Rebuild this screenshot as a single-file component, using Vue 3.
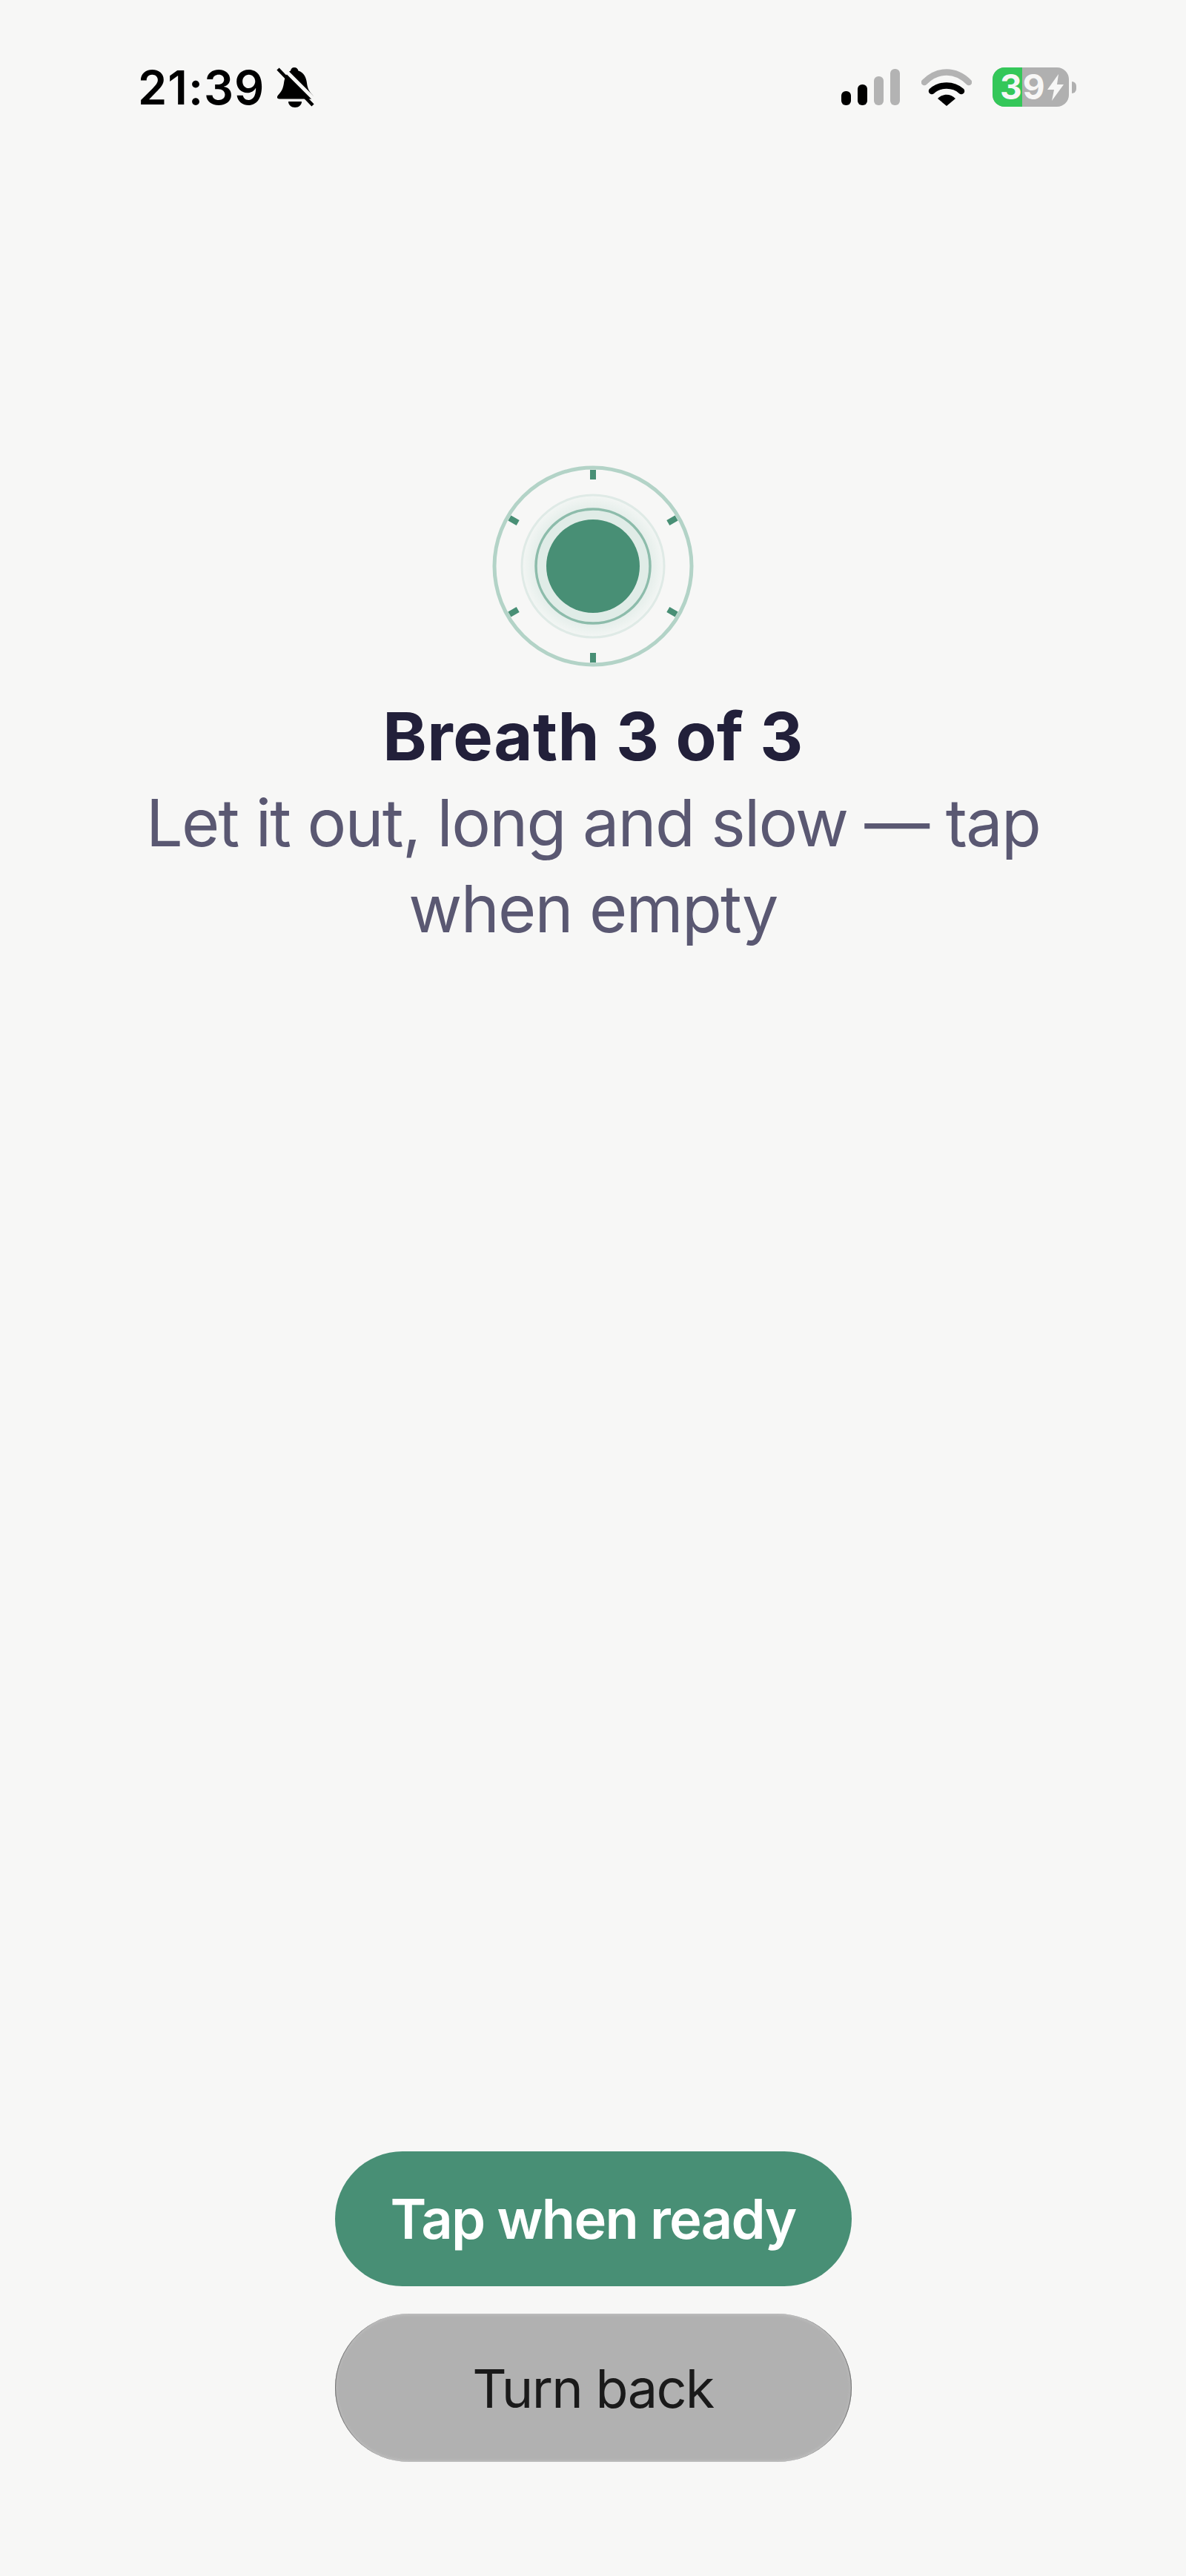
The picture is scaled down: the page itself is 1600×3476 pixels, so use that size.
<script setup>
// six tick marks round the breathing dial
const ticks = [0, 60, 120, 180, 240, 300]
</script>

<template>
  <div class="screen">
    <header class="status-bar">
      <div class="status-left">
        <span class="clock">21:39</span>
        <svg class="bell" viewBox="0 0 51 54" aria-hidden="true">
          <path d="M24 0c3 0 5 2 5.500 4.500C37 7 40 13 41 21c.8 7 3 11.500 7.500 16 2.500 2.500 2 5.500-1.500 5.500H4C.5 42.500 0 39.500 2.500 37 7 32.500 9 28 10 21c1-8 4-14 9-16.500C19.500 2 21 0 24 0z" />
          <path d="M16 46h18c0 4.500-4 8-9 8s-9-3.500-9-8z" />
          <path class="bell-gap" d="M7 -1L54 46" />
          <path class="bell-slash" d="M2 2L49 51" />
        </svg>
      </div>
      <div class="status-right">
        <div class="signal">
          <span class="bar bar-1"></span>
          <span class="bar bar-2"></span>
          <span class="bar bar-3 off"></span>
          <span class="bar bar-4 off"></span>
        </div>
        <svg class="wifi" viewBox="0 0 68 50" aria-hidden="true">
          <path class="wifi-off" d="M4 18C22 0 46 0 64 18" />
          <path class="wifi-on" d="M14 30C25 20 43 20 54 30" />
          <path d="M34 50L22 40C29 33 39 33 46 40z" />
        </svg>
        <div class="battery">
          <div class="battery-body">
            <div class="battery-fill"></div>
            <span class="battery-text">39</span>
            <svg class="bolt" viewBox="0 0 22 36" aria-hidden="true">
              <path d="M15 0L0 21h9L6 36 22 14h-9z" />
            </svg>
          </div>
          <span class="battery-nub"></span>
        </div>
      </div>
    </header>

    <main class="hero">
      <svg class="dial" viewBox="0 0 280 280" aria-hidden="true">
        <defs>
          <radialGradient id="halo-fade" cx="50%" cy="50%" r="50%">
            <stop offset="78%" stop-color="#e3ede9" />
            <stop offset="100%" stop-color="#f3f6f4" />
          </radialGradient>
        </defs>
        <circle class="halo" cx="140" cy="140" r="96" />
        <circle class="mid-ring" cx="140" cy="140" r="77" />
        <circle class="outer-ring" cx="140" cy="140" r="133" />
        <rect
          v-for="a in ticks"
          :key="a"
          class="tick"
          x="136"
          y="10"
          width="8"
          height="13"
          :transform="`rotate(${a} 140 140)`"
        />
        <circle class="core" cx="140" cy="140" r="63" />
      </svg>
      <h1 class="title">Breath 3 of 3</h1>
      <p class="subtitle">Let it out, long and slow — tap when empty</p>
    </main>

    <footer class="actions">
      <button class="btn btn-primary">Tap when ready</button>
      <button class="btn btn-secondary">Turn back</button>
    </footer>
  </div>
</template>

<style>
html,
body {
  margin: 0;
  background: #f7f7f6;
}
</style>

<style scoped>
.screen {
  display: flex;
  flex-direction: column;
  width: 1600px;
  height: 3476px;
  box-sizing: border-box;
  padding-bottom: 154px;
  background: #f7f7f6;
  font-family: Inter, "Liberation Sans", sans-serif;
}

.status-bar {
  display: flex;
  align-items: flex-start;
  justify-content: space-between;
  padding: 91px 148px 0 186px;
  height: 54px;
}

.status-left {
  display: flex;
  align-items: center;
  gap: 16px;
}

.clock {
  font-size: 63px;
  line-height: 54px;
  font-weight: 600;
  letter-spacing: 1px;
  color: #000;
}

.bell {
  width: 51px;
  height: 54px;
  fill: #000;
}

.bell-gap {
  stroke: #f7f7f6;
  stroke-width: 5;
  fill: none;
}

.bell-slash {
  stroke: #000;
  stroke-width: 4.500;
  fill: none;
}

.status-right {
  display: flex;
  align-items: flex-start;
}

.signal {
  display: flex;
  align-items: flex-end;
  gap: 9px;
  height: 49px;
  margin-top: 2px;
  margin-right: 29px;
}

.bar {
  width: 13px;
  border-radius: 6px;
  background: #000;
}

.bar.off {
  background: #b3b3b3;
}

.bar-1 { height: 19px; }
.bar-2 { height: 28px; }
.bar-3 { height: 39px; }
.bar-4 { height: 49px; }

.wifi {
  width: 68px;
  height: 50px;
  margin-top: 2px;
  margin-right: 28px;
  fill: #000;
}

.wifi-off,
.wifi-on {
  fill: none;
  stroke-width: 8.500;
  stroke-linecap: round;
}

.wifi-off { stroke: #b3b3b3; }
.wifi-on { stroke: #000; }

.battery {
  display: flex;
  align-items: center;
  gap: 4px;
}

.battery-body {
  position: relative;
  display: flex;
  align-items: center;
  width: 103px;
  height: 53px;
  border-radius: 16px;
  background: #b0b0b0;
}

.battery-fill {
  position: absolute;
  left: 0;
  top: 0;
  bottom: 0;
  width: 40px;
  border-radius: 16px 0 0 16px;
  background: #34c759;
}

.battery-text {
  position: relative;
  margin-left: 10px;
  font-size: 46px;
  line-height: 53px;
  font-weight: 700;
  letter-spacing: 1px;
  color: #f7f7f6;
}

.bolt {
  position: relative;
  width: 22px;
  height: 36px;
  margin-left: 2px;
  fill: #f7f7f6;
}

.battery-nub {
  width: 6px;
  height: 16px;
  border-radius: 0 6px 6px 0;
  background: #b0b0b0;
}

.hero {
  display: flex;
  flex-direction: column;
  align-items: center;
  margin-top: 479px;
}

.dial {
  width: 280px;
  height: 280px;
}

.halo {
  fill: url(#halo-fade);
  stroke: #dfeae6;
  stroke-width: 3;
}

.mid-ring {
  fill: #e0ece7;
  stroke: #8dbcab;
  stroke-width: 3.500;
}

.outer-ring {
  fill: none;
  stroke: #b3d3c7;
  stroke-width: 5;
}

.tick {
  fill: #488f75;
}

.core {
  fill: #488f75;
}

.title {
  margin: 32px 0 0;
  font-size: 90px;
  line-height: 116px;
  font-weight: 700;
  letter-spacing: 0.5px;
  color: #22203a;
}

.subtitle {
  max-width: 1280px;
  margin: 0;
  font-size: 88px;
  line-height: 116px;
  font-weight: 400;
  letter-spacing: -1.7px;
  text-align: center;
  color: #5a5872;
}

.actions {
  display: flex;
  flex-direction: column;
  align-items: center;
  gap: 37px;
  margin-top: auto;
}

.btn {
  display: block;
  width: 697px;
  padding: 0;
  border: 0;
  font-family: inherit;
  text-align: center;
}

.btn-primary {
  height: 182px;
  border-radius: 91px;
  background: #488f75;
  font-size: 74px;
  font-weight: 600;
  letter-spacing: -1.7px;
  color: #fff;
}

.btn-secondary {
  height: 200px;
  border-radius: 100px;
  background: #b1b1b1;
  box-shadow: inset 2px 0 1px -1px #6e6e6e, inset -2px 0 1px -1px #6e6e6e, inset 0 0 4px 1px #c4c4c4;
  font-size: 72px;
  font-weight: 400;
  letter-spacing: -1.7px;
  color: #1a1a1a;
}
</style>
